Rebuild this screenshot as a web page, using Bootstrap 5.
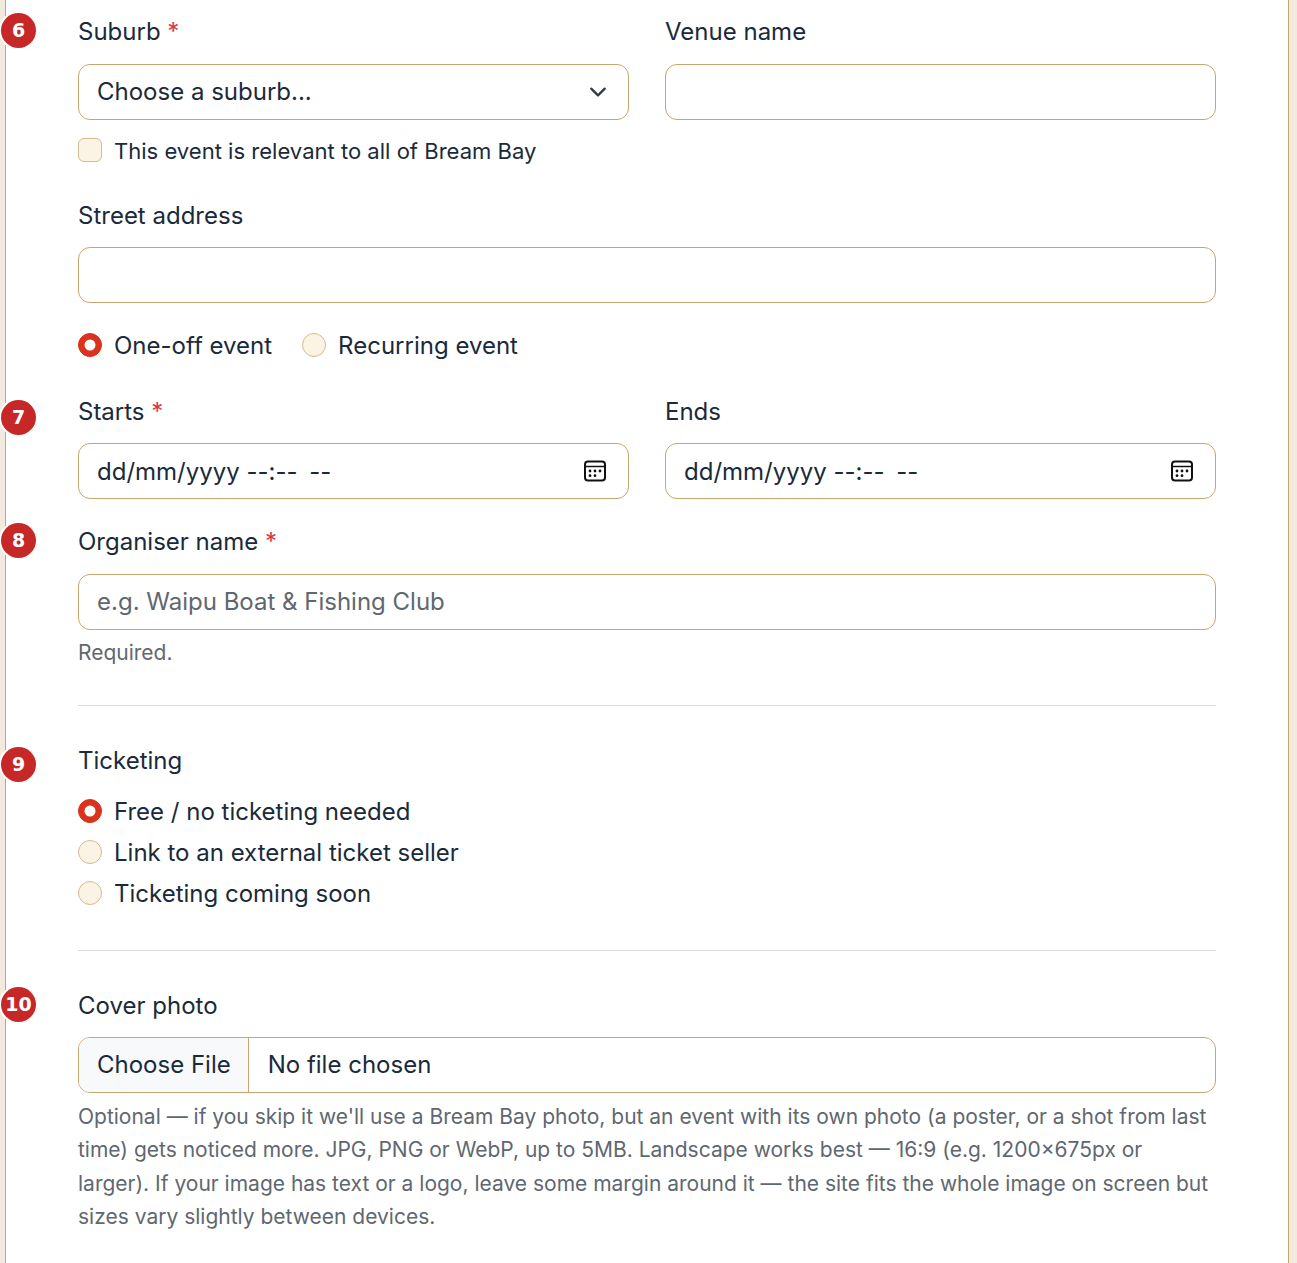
<!doctype html>
<html lang="en">
<head>
<meta charset="utf-8">
<title>Event form</title>
<link href="https://cdn.jsdelivr.net/npm/bootstrap@5.3.0/dist/css/bootstrap.min.css" rel="stylesheet">
<style>
html{font-size:24px;height:100%;overflow:hidden}
body{font-family:Inter,"Liberation Sans",sans-serif;line-height:1.6;color:#1a2a3a;background:#f2eadf;height:100%;overflow:hidden;font-size:24px}
.sheet{margin:0 8px 0 5px;min-height:1263px;background:#fff;border-left:1px solid #c8a66d;border-right:1px solid #c8a66d;padding:13px 72px 0}
.field-block{position:relative}
.step-dot{position:absolute;left:-77px;width:35px;height:35px;border-radius:50%;background:#c62828;color:#fff;font-family:"DejaVu Sans",sans-serif;font-weight:700;font-size:19px;line-height:35px;text-align:center;box-shadow:0 0 0 2px #fff}
.dot-6{top:0}
.dot-7{top:7px}
.dot-8{top:0}
.dot-9{top:5px}
.dot-10{top:0}
.form-label{margin-bottom:13px;color:#1a2a3a}
.tight-label{margin-bottom:12px}
.req{color:#dc3545}
.form-control,.form-select{border-color:#c8a66d;border-radius:12px;color:#1a2a3a}
.form-select{background-size:24px 18px}
.form-control::placeholder{color:#5f6770}
.form-check-input{background-color:#fbf3e4;border-color:#d5bb8c}
.form-check-input:checked{background-color:#d9321e;border-color:#d9321e}
.all-bay{font-size:22.05px}
.inline-radios{column-gap:30px}
.street-gap{margin-top:26px}
.starts-gap{margin-top:27px}
.after-rule{margin-top:36.2px}
.cover-gap{margin-top:36px}
hr.organiser-end{margin-top:35px}
hr.tick-end{margin-top:36px}
.fake-date{display:flex;justify-content:space-between;align-items:center;padding-top:10px;padding-bottom:8px}
.fake-date svg{width:24px;height:24px;margin-right:3px;margin-bottom:2px}
.ampm{margin-left:5px}
.form-text{font-size:21px;color:#5f6770;margin-top:6px;line-height:1.6}
.cover-help{margin-top:7px;line-height:33.3px}
hr.rule{margin-bottom:0;border-color:#d9d9d9;opacity:1}
.form-control::file-selector-button{background:#f8f9fa;color:#1a2a3a;padding-right:17px;margin-inline-end:19px}
</style>
</head>
<body>
<div class="sheet">
<form>
  <div class="field-block">
    <span class="step-dot dot-6">6</span>
    <div class="row gx-4">
      <div class="col-6">
        <label class="form-label">Suburb <span class="req">*</span></label>
        <select class="form-select"><option>Choose a suburb...</option></select>
        <div class="form-check mt-2 mb-0">
          <input class="form-check-input" type="checkbox" id="allbay">
          <label class="form-check-label all-bay" for="allbay">This event is relevant to all of Bream Bay</label>
        </div>
      </div>
      <div class="col-6">
        <label class="form-label">Venue name</label>
        <input class="form-control" type="text">
      </div>
    </div>
  </div>

  <div class="street-gap">
    <label class="form-label tight-label">Street address</label>
    <input class="form-control" type="text">
  </div>

  <div class="d-flex inline-radios mt-3">
    <div class="form-check mb-0">
      <input class="form-check-input" type="radio" name="kind" id="k1" checked>
      <label class="form-check-label" for="k1">One-off event</label>
    </div>
    <div class="form-check mb-0">
      <input class="form-check-input" type="radio" name="kind" id="k2">
      <label class="form-check-label" for="k2">Recurring event</label>
    </div>
  </div>

  <div class="field-block starts-gap">
    <span class="step-dot dot-7">7</span>
    <div class="row gx-4">
      <div class="col-6">
        <label class="form-label tight-label">Starts <span class="req">*</span></label>
        <div class="form-control fake-date"><span>dd/mm/yyyy --:-- <span class="ampm">--</span></span>
          <svg viewBox="0 0 24 24" fill="none" stroke="#111" stroke-width="2"><rect x="2" y="2.5" width="20" height="19" rx="3"/><path d="M2 7.5h20" stroke-width="1.5"/><g fill="#111" stroke="none"><circle cx="7" cy="12" r="1.4"/><circle cx="12" cy="12" r="1.4"/><circle cx="17" cy="12" r="1.4"/><circle cx="7" cy="16.7" r="1.4"/><circle cx="12" cy="16.7" r="1.4"/></g></svg>
        </div>
      </div>
      <div class="col-6">
        <label class="form-label tight-label">Ends</label>
        <div class="form-control fake-date"><span>dd/mm/yyyy --:-- <span class="ampm">--</span></span>
          <svg viewBox="0 0 24 24" fill="none" stroke="#111" stroke-width="2"><rect x="2" y="2.5" width="20" height="19" rx="3"/><path d="M2 7.5h20" stroke-width="1.5"/><g fill="#111" stroke="none"><circle cx="7" cy="12" r="1.4"/><circle cx="12" cy="12" r="1.4"/><circle cx="17" cy="12" r="1.4"/><circle cx="7" cy="16.7" r="1.4"/><circle cx="12" cy="16.7" r="1.4"/></g></svg>
        </div>
      </div>
    </div>
  </div>

  <div class="field-block mt-3">
    <span class="step-dot dot-8">8</span>
    <label class="form-label">Organiser name <span class="req">*</span></label>
    <input class="form-control" type="text" placeholder="e.g. Waipu Boat &amp; Fishing Club">
    <div class="form-text">Required.</div>
  </div>

  <hr class="rule organiser-end">

  <div class="field-block after-rule">
    <span class="step-dot dot-9">9</span>
    <label class="form-label tight-label">Ticketing</label>
    <div class="form-check"><input class="form-check-input" type="radio" name="tk" id="t1" checked><label class="form-check-label" for="t1">Free / no ticketing needed</label></div>
    <div class="form-check"><input class="form-check-input" type="radio" name="tk" id="t2"><label class="form-check-label" for="t2">Link to an external ticket seller</label></div>
    <div class="form-check"><input class="form-check-input" type="radio" name="tk" id="t3"><label class="form-check-label" for="t3">Ticketing coming soon</label></div>
  </div>

  <hr class="rule tick-end">

  <div class="field-block cover-gap">
    <span class="step-dot dot-10">10</span>
    <label class="form-label tight-label">Cover photo</label>
    <input class="form-control" type="file">
    <div class="form-text cover-help">Optional — if you skip it we'll use a Bream Bay photo, but an event with its own photo (a poster, or a shot from last time) gets noticed more. JPG, PNG or WebP, up to 5MB. Landscape works best — 16:9 (e.g. 1200×675px or larger). If your image has text or a logo, leave some margin around it — the site fits the whole image on screen but sizes vary slightly between devices.</div>
  </div>
</form>
</div>
<script src="https://cdn.jsdelivr.net/npm/bootstrap@5.3.0/dist/js/bootstrap.bundle.min.js"></script>
</body>
</html>
